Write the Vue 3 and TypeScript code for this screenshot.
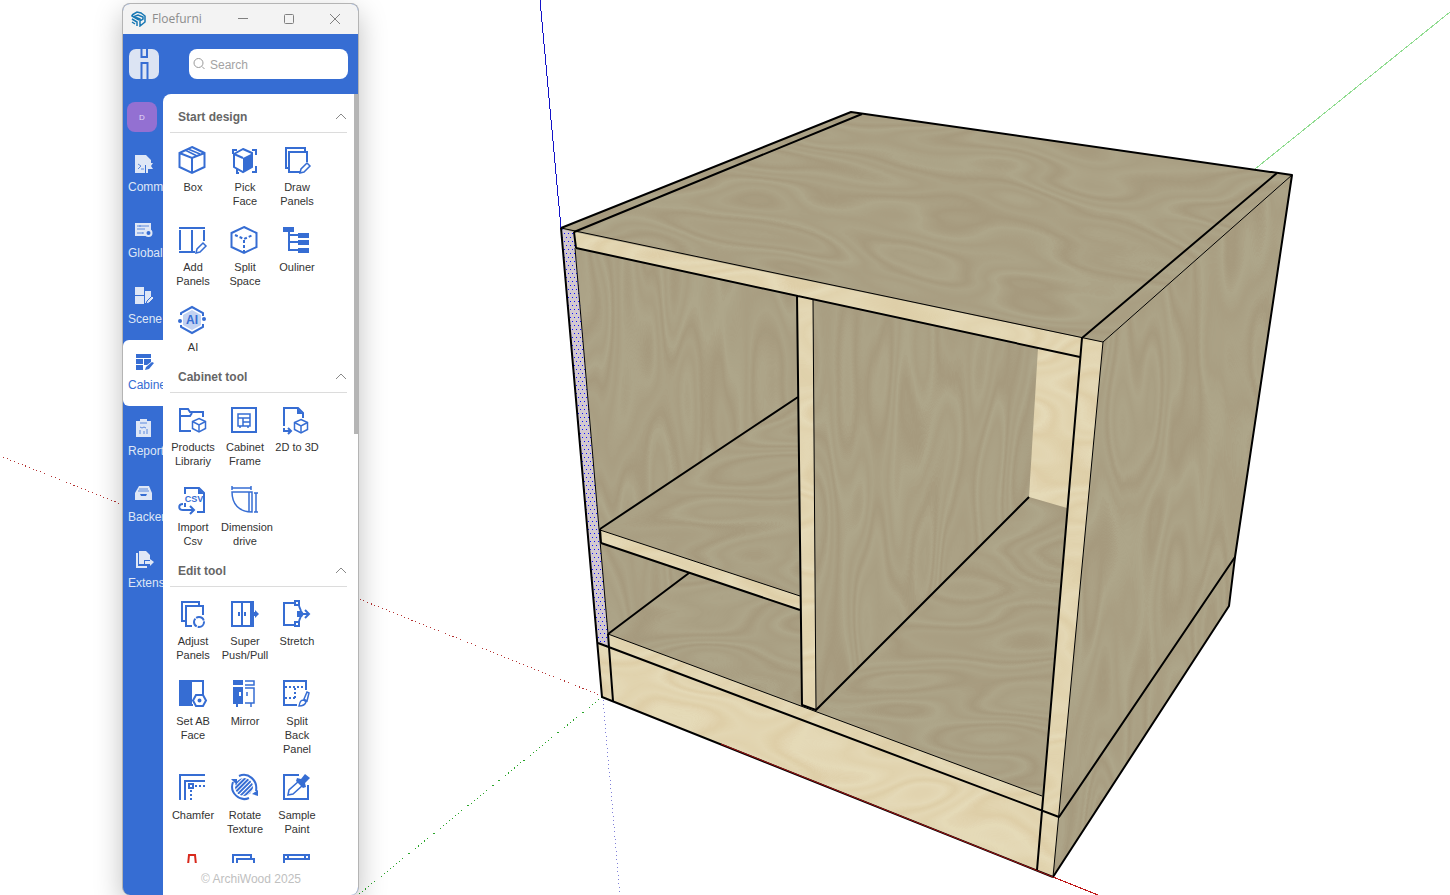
<script setup lang="ts">
import { ref } from 'vue'

interface Tool {
  label: string
  icon: string
}
interface Section {
  title: string
  tools: Tool[]
}
interface NavItem {
  label: string
  icon: string
}

const query = ref('')
const active = ref('Cabinet')
const closed = ref<string[]>([])

function toggle(title: string) {
  closed.value = closed.value.includes(title)
    ? closed.value.filter((t) => t !== title)
    : [...closed.value, title]
}

const pen = '<path class="bg thin" d="M17 27l1-4 6-6 3 3-6 6z"/>'
const hex = 'M13 1l12.5 6v14L13 27 .5 21V7z'
const cube = (x: number, y: number) =>
  `<g class="thin" transform="translate(${x} ${y})"><path class="bg" d="M0-6.5l6.5 3v7L0 7l-6.5-3.500v-7z"/><path d="M-6.500-3.500L0 0l6.500-3.500M0 0v7"/></g>`

const nav: NavItem[] = [
  { label: 'Command', icon: '<path class="f" d="M0 0h11l5 5v5h-6v8H0z"/><path class="cut" d="M3 9l3 2-3 3M6 14h3"/><path class="f" d="M11 8h7l-2 3 2 3h-5v4h-2z"/>' },
  { label: 'Global', icon: '<path class="f" d="M0 2h16v8h-4v5H0z"/><path class="cut" d="M2 5h12M2 8h8M2 12h6M5 4v2M8 11v2"/><circle cx="13.500" cy="12" r="3" class="ring"/>' },
  { label: 'Scene', icon: '<path class="f" d="M0 0h9v8H0zM0 9h9v8H0zM10 4h6v6l-5 6h-1z"/><path class="f edge" d="M11 17l1-3 5-5 2 2-5 5z"/>' },
  { label: 'Cabinet', icon: '<path class="f" d="M1 1h15v4H1zM1 6h7v5H1zM9 6h7v3l-4 3H9zM1 12h7v5H1zM10 17l1-3 6-5 2 1-5 6z"/>' },
  { label: 'Report', icon: '<path class="f" d="M1 2h4V0h7v2h4v16H1z"/><path class="cut" d="M5 4h7M5 8l2 1 2-1 2 1M5 11v4M9 12v3M12 10v5"/>' },
  { label: 'Backend', icon: '<path class="f" d="M4 1h10l3 7v7H0V8z"/><path class="cut" d="M4 4h9M3 6h11"/><path fill="#366dd3" d="M5 9h7l-1 2H6z"/>' },
  { label: 'Extension', icon: '<path class="f" d="M1 2h2v13h9v2H1zM4 0h7l4 4v5H9v4H4z"/><path class="f" d="M10 10h5V8l4 3-4 4v-2h-5z"/>' }
]

const sections: Section[] = [
  {
    title: 'Start design',
    tools: [
      { label: 'Box', icon: `<path d="${hex}M.5 7L13 12l12.500-5M13 12v15"/><path class="thin" d="M6 4l12 6M9 3l12 5"/>` },
      { label: 'Pick Face', icon: '<path d="M2 8V4h4M21 4h4v5M25 20v6h-4M8 27H6v-4"/><path class="bg" d="M12 3l9 4v14l-9 5-9-5V8z"/><path d="M3 8l9 4"/><path class="f" d="M12 12l10-5v14l-10 5z"/>' },
      { label: 'Draw Panels', icon: `<path d="M6 22H3V2h19v3"/><path d="M24 16V6H6v20h11"/>${pen}` },
      { label: 'Add Panels', icon: `<path d="M0 2h26M1 4v20M13 4v21M25 4v11M0 26h16"/>${pen}` },
      { label: 'Split Space', icon: `<path d="${hex}"/><path stroke-dasharray="3 2" d="M4 9l9 4 9-4M13 14v12"/>` },
      { label: 'Ouliner', icon: '<path class="f" d="M0 1h11v5H0zM15 7h11v5H15zM15 14h11v5H15zM15 22h11v5H15z"/><path d="M6 6v18h9M6 9h9M6 16h9"/>' },
      { label: 'AI', icon: '<path d="M2 9V7l11-6 11 6v3M24 18v3l-11 6-11-6v-2"/><path fill="#c1d2f2" stroke="none" d="M13 4l9 5v10l-9 5-9-5V9z"/><circle class="f" cx="1" cy="15" r="2"/><circle class="f" cx="25" cy="13" r="2"/><text x="13" y="18">AI</text>' }
    ]
  },
  {
    title: 'Cabinet tool',
    tools: [
      { label: 'Products Librariy', icon: `<path d="M12 25H1V3h8l2 3h13v5M1 10h10l2-3"/>${cube(20, 19)}` },
      { label: 'Cabinet Frame', icon: '<path d="M1 2h24v24H1z"/><path class="thin" d="M7 8h12v12H7zM7 12h12M12 12v8M12 16h7M9 20v2M17 20v2"/>' },
      { label: '2D to 3D', icon: `<path d="M1 20V2h14l5 5v5M1 22v3h7M5 22l3 3-3 3"/><path class="f" d="M14 2l6 6h-6z"/>${cube(18, 20)}` },
      { label: 'Import Csv', icon: '<path d="M6 8V2h14l5 5v19h-7M6 17v4"/><path class="f" d="M19 2l6 6h-6z"/><path d="M4 18c-5 0-5 6 0 6h11M11 20l4 4-4 4"/><text class="csv" x="15" y="16">CSV</text>' },
      { label: 'Dimension drive', icon: '<path class="thin" d="M1 6h20v20C8 26 1 18 1 6zM18 6v19M1 2h19M1 0v4M20 0v4M25 7v19M23 7h4M23 26h4"/>' }
    ]
  },
  {
    title: 'Edit tool',
    tools: [
      { label: 'Adjust Panels', icon: '<path d="M6 21H3V2h17v3"/><path d="M24 15V6H7v20h6"/><circle class="bg" cx="20" cy="22" r="5" stroke-dasharray="9 1"/>' },
      { label: 'Super Push/Pull', icon: '<path d="M1 2h19v24H1zM11 2v24M8 12v4M14 12v4"/><path class="f" d="M19 1h4v11h1v-2l4 4-4 4v-2h-1v11h-4z"/>' },
      { label: 'Stretch', icon: '<path d="M12 3H1v22h11M16 6l2 5M16 21l2-5M18 14h8M22 10l4 4-4 4"/><path class="bg" d="M12 1h4v4h-4zM12 22h4v4h-4z"/><path class="f" d="M14 11h5l2 3-2 3h-5z"/>' },
      { label: 'Set AB Face', icon: '<path d="M13 1h11v14M12 25h2"/><path class="f" d="M0 0h13v26H0z"/><path class="bg" d="M17 15h7l3 5.500-3 5.500h-7l-3-5.500z"/><circle cx="20.500" cy="20.500" r="1"/>' },
      { label: 'Mirror', icon: '<path class="f" d="M2 0h10v5H2zM2 7h10v17H7v3H5v-3H2z"/><path class="thin" d="M14 1h9v4h-9M14 8h9v15h-9M20 23v4M16 12v4"/><path stroke="#fff" d="M9 12v4"/>' },
      { label: 'Split Back Panel', icon: '<path d="M23 10V1H1v24h13"/><path stroke-dasharray="2 2" d="M2 7h20M2 18h12M12 8v10"/><path class="bg thin" d="M16 26c1-6 3-6 5-6l2 2c-1 3-3 4-7 4zM21 19l3-7 2 1-2 8z"/>' },
      { label: 'Chamfer', icon: '<path d="M1 26V1h25M6 26V7h20"/><path d="M10 10h4v4h-4z"/><path stroke-dasharray="2 2" d="M16 12h10M12 16v10"/>' },
      { label: 'Rotate Texture', icon: '<path d="M8 2c9-4 19 4 17 15M18 24C9 28-2 19 2 8"/><path class="f" d="M0 5h6v6zM27 16v6l-6-2z"/><circle class="hatch" cx="13" cy="13" r="9"/>' },
      { label: 'Sample Paint', icon: '<path d="M16 1H1v24h24V11"/><path class="bg thin" d="M5 21l1-5L16 7l4 4-10 9z"/><path class="f" d="M14 4l4 1 4-5 5 4-5 5 1 4-3 1-7-7z"/>' },
      { label: '', icon: '<path stroke="#d8291c" d="M9 11L10 1h6l1 10"/>' },
      { label: '', icon: '<path d="M2 12V1h18v3M6 12V5h17v7"/>' },
      { label: '', icon: '<path d="M1 1h25v4H1zM5 1v4M22 1v4M1 5v8"/>' }
    ]
  }
]

const darkTop = ['561,228 851,112 862,114 1277,173 1292,175 1103,342 1082,338 574,232']
const darkFloor = ['600,530 798,397 800,596', '608,634 689,573 800,609 802,705', '816,710 1029,497 1067,508 1042,796']
const darkWall = [
  '575,248 797,295 798,397 600,530',
  '601,543 689,573 608,634',
  '813,300 1038,348 1029,497 816,710',
  '1103,342 1292,175 1235,557 1229,606 1053,877'
]
const light = [
  '574,232 1082,338 1080,357 575,248',
  '797,295 813,300 816,710 802,705',
  '600,530 800,596 800,610 601,543',
  '1082,338 1103,342 1053,877 1037,870',
  '1038,348 1080,357 1067,508 1029,497',
  '608,634 1042,796 1037,870 1053,877 602,697 598,643'
]
const thick = [
  'M561 228L851 112L1292 175L1235 557L1229 606L1053 877',
  'M574 232L862 114M1082 338L1277 173',
  'M561 228L602 697L1053 877M574 232L576 248',
  'M576 248L1080 357M797 295L802 705L816 710L1029 497',
  'M600 529L798 397M601 543L800 610M608 634L689 573',
  'M598 643L1059 817L1235 557M1082 338L1037 870M608 634L613 701',
  'M600 529L601 543'
]
const thin = [
  'M561 228L1103 342L1292 175M1103 342L1053 877',
  'M575 248L608 634L1042 796',
  'M600 530L800 596M813 300L816 710'
]

const rings = '0 0 0 .1 .22 .04 .14 .02 .24 .06 .16 0 .24 .08 .16 .02 .24 .06 .14 .02 .2 0 0'
const shade = '0 0 0 0 .55  0 0 0 0 .45  0 0 0 0 .34  1 0 0 0 0'
const honey = '0 0 0 0 .78  0 0 0 0 .66  0 0 0 0 .45  1 0 0 0 0'
const grains = [
  { id: 'grain-h', freq: '0.005 0.018', seed: 8, tint: shade },
  { id: 'grain-v', freq: '0.02 0.004', seed: 5, tint: shade },
  { id: 'grain-l', freq: '0.006 0.014', seed: 3, tint: honey }
]
</script>

<template>
  <main class="desktop">
    <svg class="scene" viewBox="0 0 1450 895" preserveAspectRatio="xMinYMin slice" role="img" aria-label="Cabinet model">
      <defs>
        <filter v-for="g in grains" :id="g.id" :key="g.id" x="0" y="0" width="1" height="1" color-interpolation-filters="sRGB">
          <feTurbulence type="fractalNoise" :baseFrequency="g.freq" numOctaves="2" :seed="g.seed" />
          <feColorMatrix :values="g.tint" />
          <feComponentTransfer><feFuncA type="table" :tableValues="rings" /></feComponentTransfer>
        </filter>
        <clipPath id="clip-top"><polygon v-for="p in darkTop" :key="p" :points="p" /></clipPath>
        <clipPath id="clip-floor"><polygon v-for="p in darkFloor" :key="p" :points="p" /></clipPath>
        <clipPath id="clip-wall"><polygon v-for="p in darkWall" :key="p" :points="p" /></clipPath>
        <clipPath id="clip-light"><polygon v-for="p in light" :key="p" :points="p" /></clipPath>
        <pattern id="selection" width="4" height="8" patternUnits="userSpaceOnUse">
          <rect class="dot" x="0" y="1" width="1" height="1" />
          <rect class="dot" x="2" y="5" width="1" height="1" />
        </pattern>
      </defs>

      <g fill="none" shape-rendering="crispEdges">
        <path stroke="#1414c8" d="M540 0L561 228" />
        <path stroke="#8fdc8f" d="M1255 169L1450 12" />
        <path stroke="#b43232" stroke-dasharray="1 3" d="M3 457L602 696" />
        <path stroke="#2aa52a" stroke-dasharray="1 3" d="M602 697L358 895" />
        <path stroke="#8080d8" stroke-dasharray="1 3" d="M603 700L620 895" />
        <path stroke="#c01818" d="M1053 877L1098 895" />
      </g>

      <polygon fill="#aea68a" points="561,228 851,112 1292,175 1235,557 1229,606 1053,877 602,697" />
      <polygon v-for="p in light" :key="p" fill="#e5dab8" :points="p" />
      <g clip-path="url(#clip-top)"><rect x="500" y="-120" width="900" height="600" transform="rotate(8 561 228)" filter="url(#grain-h)" /></g>
      <g clip-path="url(#clip-floor)"><rect x="500" y="380" width="700" height="450" filter="url(#grain-h)" /></g>
      <g clip-path="url(#clip-wall)"><rect x="560" y="170" width="740" height="710" filter="url(#grain-v)" /></g>
      <g clip-path="url(#clip-light)"><rect x="560" y="220" width="550" height="660" filter="url(#grain-l)" /></g>
      <polygon fill="#d3c9d0" points="561,229 574,232 609,647 598,643" />
      <polygon fill="url(#selection)" points="561,229 574,232 609,647 598,643" />

      <g fill="none" stroke="#000" stroke-linejoin="round">
        <path v-for="d in thin" :key="d" :d="d" />
        <path v-for="d in thick" :key="d" :d="d" stroke-width="2" />
        <path stroke="#a01010" d="M721 744L1053 877" />
      </g>
    </svg>

    <section class="window" aria-label="Floefurni">
      <header class="titlebar">
        <svg class="app-logo" viewBox="0 0 16 16" aria-hidden="true">
          <path d="M1 4l5-3 4 1 4 3v6l-5 4v-5l3-2V6L7 4 2 6M1 8l5 3v4M1 11l3 2M4 6l5 2v3M1 4v1l7 4" />
        </svg>
        <h1>Floefurni</h1>
        <button type="button" aria-label="Minimize"><svg viewBox="0 0 12 12"><path d="M1 5.500h10" /></svg></button>
        <button type="button" aria-label="Maximize"><svg viewBox="0 0 12 12"><rect x="1.500" y="1.500" width="9" height="9" rx="1" /></svg></button>
        <button type="button" aria-label="Close"><svg viewBox="0 0 12 12"><path d="M1 1l10 10M11 1L1 11" /></svg></button>
      </header>

      <div class="topbar">
        <svg class="brand" viewBox="0 0 30 30" aria-hidden="true">
          <rect width="30" height="30" rx="7" fill="#dce4f3" />
          <path d="M12.500 0v9M18 0v8h-5M12.500 30V14H18M18.500 13v17" fill="none" stroke="#366dd3" stroke-width="2" />
        </svg>
        <label class="search">
          <svg viewBox="0 0 12 12" aria-hidden="true"><circle cx="5.500" cy="5" r="4.500" /><path d="M9 8.500l2.500 2.500" /></svg>
          <input v-model="query" type="search" placeholder="Search" aria-label="Search" />
        </label>
      </div>

      <div class="body">
        <nav class="side">
          <button type="button" class="avatar" aria-label="Account">D</button>
          <button
            v-for="item in nav"
            :key="item.label"
            type="button"
            class="nav-item"
            :class="{ active: item.label === active }"
            @click="active = item.label"
          >
            <svg viewBox="0 0 18 18" aria-hidden="true" v-html="item.icon" />
            <span>{{ item.label }}</span>
          </button>
        </nav>

        <div class="panel">
          <div class="scroll">
            <section v-for="s in sections" :key="s.title" class="group">
              <h2>
                <button type="button" :aria-expanded="!closed.includes(s.title)" @click="toggle(s.title)">
                  {{ s.title }}
                  <svg viewBox="0 0 12 8" aria-hidden="true"><path d="M1 6l5-5 5 5" /></svg>
                </button>
              </h2>
              <div v-if="!closed.includes(s.title)" class="tools">
                <button v-for="(t, i) in s.tools" :key="i" type="button" class="tool">
                  <svg viewBox="0 0 28 28" aria-hidden="true" v-html="t.icon" />
                  <span v-if="t.label">{{ t.label }}</span>
                </button>
              </div>
            </section>
            <div class="thumb" />
          </div>
          <footer>© ArchiWood 2025</footer>
        </div>
      </div>
    </section>
    <svg width="0" height="0" class="defs" aria-hidden="true">
      <pattern id="hatch" width="3" height="3" patternUnits="userSpaceOnUse" patternTransform="rotate(45)">
        <path d="M0 0h2v3H0z" fill="#366dd3" />
      </pattern>
    </svg>
  </main>
</template>

<style>
body {
  margin: 0;
}
</style>

<style scoped>
.desktop {
  position: relative;
  height: 100vh;
  overflow: hidden;
  background: #fff;
  font-family: 'Liberation Sans', Arial, sans-serif;
}
button {
  margin: 0;
  padding: 0;
  border: 0;
  background: none;
  font: inherit;
  color: inherit;
  cursor: pointer;
}
.scene {
  display: block;
  width: 100%;
  height: 100%;
}
.dot {
  fill: #1010ff;
  shape-rendering: crispEdges;
}
.defs {
  position: absolute;
}
.window {
  position: absolute;
  top: 3px;
  bottom: 0;
  left: 122px;
  width: 235px;
  display: flex;
  flex-direction: column;
  overflow: hidden;
  border: 1px solid #b4b4b4;
  border-bottom: 0;
  border-radius: 8px;
  background: #366dd3;
  box-shadow: 0 10px 28px rgba(0, 0, 0, 0.25);
}
.titlebar {
  display: flex;
  align-items: center;
  height: 30px;
  flex: none;
  padding-left: 8px;
  background: #f3f3f3;
  color: #8c8c8c;
}
.app-logo {
  width: 16px;
  height: 16px;
  fill: none;
  stroke: #1878b4;
  stroke-width: 1.5;
}
.titlebar h1 {
  flex: 1;
  margin: 0 0 0 5px;
  font: 400 12px/16px 'Open Sans', 'Noto Sans', sans-serif;
}
.titlebar button {
  display: grid;
  place-items: center;
  width: 46px;
  height: 30px;
}
.titlebar button svg {
  width: 12px;
  height: 12px;
  fill: none;
  stroke: #808080;
}
.topbar {
  display: flex;
  align-items: center;
  justify-content: space-between;
  flex: none;
  height: 60px;
  padding: 0 10px 0 6px;
}
.brand {
  width: 30px;
  height: 30px;
}
.search {
  display: flex;
  align-items: center;
  gap: 5px;
  box-sizing: border-box;
  width: 159px;
  height: 30px;
  padding: 0 4px;
  border-radius: 8px;
  background: #fff;
}
.search svg {
  width: 12px;
  height: 12px;
  flex: none;
  fill: none;
  stroke: #999;
}
.search input {
  flex: 1;
  min-width: 0;
  padding: 1px 0 0;
  border: 0;
  outline: 0;
  background: none;
  font: 12px/16px 'Liberation Sans', Arial, sans-serif;
  color: #333;
}
.search input::placeholder {
  color: #a3a3a3;
}
.body {
  display: flex;
  flex: 1;
  min-height: 0;
}
.side {
  display: flex;
  flex-direction: column;
  width: 40px;
  flex: none;
  padding-top: 8px;
  overflow: hidden;
}
.avatar {
  width: 30px;
  height: 30px;
  flex: none;
  margin: 0 0 10px 4px;
  border-radius: 8px;
  background: #9370d2;
  font-size: 8px;
  color: #e6dcf6;
}
.nav-item {
  display: flex;
  flex-direction: column;
  align-items: flex-start;
  gap: 6px;
  height: 66px;
  width: 60px;
  flex: none;
  padding: 13px 0 0 5px;
  border-radius: 6px;
  font-size: 12px;
  line-height: 16px;
  color: #dfe7f6;
}
.nav-item svg {
  width: 18px;
  height: 18px;
  margin-left: 7px;
  overflow: visible;
}
.nav-item.active {
  background: #fff;
  color: #366dd3;
}
.nav-item :deep(.f) {
  fill: currentColor;
}
.nav-item :deep(.edge) {
  stroke: #366dd3;
}
.nav-item :deep(.cut) {
  fill: none;
  stroke: #5d8add;
}
.nav-item :deep(.ring) {
  fill: #366dd3;
  stroke: currentColor;
  stroke-width: 2;
}
.panel {
  display: flex;
  flex: 1;
  flex-direction: column;
  min-width: 0;
  border-radius: 8px 0 0 0;
  background: #fff;
}
.scroll {
  position: relative;
  flex: 1;
  min-height: 0;
  padding: 7px 11px 0 7px;
  overflow: hidden;
}
.thumb {
  position: absolute;
  top: 0;
  right: 0;
  width: 4px;
  height: 340px;
  background: #b5b5b5;
}
.group {
  padding-bottom: 7px;
}
.group h2 {
  margin: 0;
  border-bottom: 1px solid #dcdcdc;
  font-size: 12px;
  line-height: 16px;
  color: #666;
}
.group h2 button {
  display: flex;
  align-items: center;
  justify-content: space-between;
  width: 100%;
  height: 31px;
  padding-left: 8px;
}
.group h2 svg {
  width: 12px;
  height: 8px;
  fill: none;
  stroke: #888;
}
.tools {
  display: grid;
  grid-template-columns: repeat(3, 52px);
  row-gap: 18px;
  margin: 13px 0 0 -3px;
}
.tool {
  display: flex;
  flex-direction: column;
  align-items: center;
  gap: 6px;
  font-size: 11px;
  line-height: 14px;
  color: #333;
}
.tool span {
  width: 48px;
}
.tool svg {
  width: 28px;
  height: 28px;
  overflow: visible;
  fill: none;
  stroke: #366dd3;
  stroke-width: 2;
}
.tool :deep(.f) {
  fill: #366dd3;
  stroke: none;
}
.tool :deep(.bg) {
  fill: #fff;
}
.tool :deep(.thin) {
  stroke-width: 1.5;
}
.tool :deep(.hatch) {
  fill: url(#hatch);
  stroke: none;
}
.tool :deep(text) {
  fill: #366dd3;
  stroke: none;
  font: bold 12px 'Liberation Sans', Arial, sans-serif;
  text-anchor: middle;
}
.tool :deep(.csv) {
  font-size: 9px;
}
footer {
  flex: none;
  padding-right: 19px;
  font-size: 12px;
  line-height: 32px;
  text-align: center;
  color: #c0c0c0;
}
</style>
